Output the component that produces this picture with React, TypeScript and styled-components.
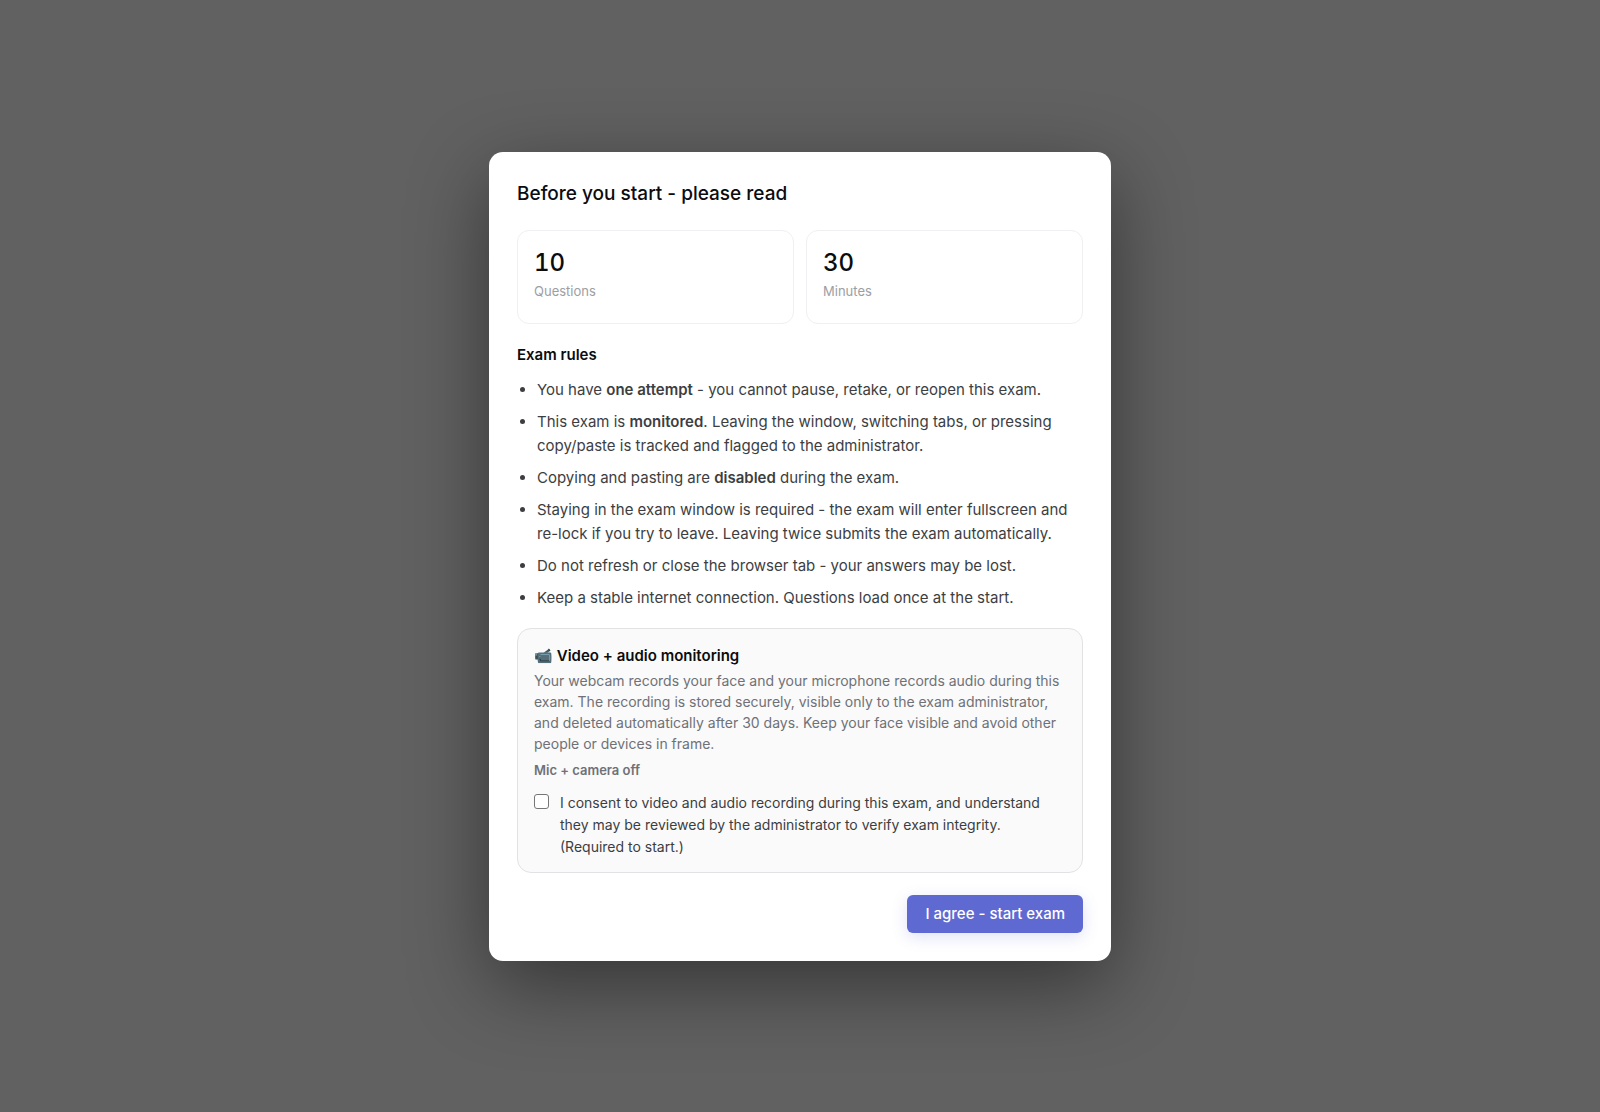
import React, { useState } from "react";
import styled, { createGlobalStyle } from "styled-components";

const GlobalStyle = createGlobalStyle`
  *, *::before, *::after { box-sizing: border-box; }
  body {
    margin: 0;
    background: #616161;
    font-family: Inter, "Liberation Sans", sans-serif;
    -webkit-font-smoothing: antialiased;
  }
`;

const Overlay = styled.main`
  display: flex;
  align-items: center;
  justify-content: center;
  min-height: 100vh;
  padding: 24px;
`;

const Dialog = styled.section`
  width: 100%;
  max-width: 622px;
  padding: 28px;
  border-radius: 14px;
  background: #ffffff;
  box-shadow: 0 24px 80px rgba(0, 0, 0, 0.45);
`;

const Title = styled.h1`
  margin: 0 0 22px;
  color: #0b0c0e;
  font-size: 19px;
  font-weight: 500;
  line-height: 28px;
`;

const Stats = styled.div`
  display: grid;
  grid-template-columns: 1fr 1fr;
  gap: 12px;
  margin-bottom: 20px;
`;

const Stat = styled.div`
  padding: 16px 16px 22px;
  border: 1px solid #f0f0f2;
  border-radius: 12px;
`;

const StatValue = styled.div`
  color: #0b0c0e;
  font-size: 24px;
  font-weight: 500;
  font-variant-numeric: tabular-nums;
  line-height: 32px;
`;

const StatLabel = styled.div`
  margin-top: 2px;
  color: #9c9ea3;
  font-size: 13px;
  line-height: 20px;
`;

const SectionTitle = styled.h2`
  margin: 0 0 12px;
  color: #0b0c0e;
  font-size: 15px;
  font-weight: 600;
  line-height: 22px;
`;

const Rules = styled.ul`
  margin: 0 0 18px;
  padding-left: 20px;
  color: #3c3e42;
  font-size: 15px;
  line-height: 24px;

  li + li { margin-top: 8px; }
  strong { font-weight: 600; }
`;

const Monitoring = styled.div`
  padding: 16px 16px 14px;
  border: 1px solid #e2e2e5;
  border-radius: 14px;
  background: #fafafa;
`;

const MonitoringTitle = styled.h2`
  margin: 0 0 3px;
  color: #0b0c0e;
  font-size: 15px;
  font-weight: 600;
  line-height: 22px;
`;

const Note = styled.p`
  margin: 0 0 6px;
  color: #6f7177;
  font-size: 14px;
  line-height: 21px;
`;

const DeviceStatus = styled.p`
  margin: 0 0 12px;
  color: #6f7177;
  font-size: 13px;
  font-weight: 600;
  line-height: 20px;
`;

const Consent = styled.label`
  display: flex;
  align-items: flex-start;
  gap: 11px;
  color: #3c3e42;
  font-size: 14px;
  line-height: 22px;
`;

const Checkbox = styled.input`
  flex: none;
  appearance: none;
  width: 15px;
  height: 15px;
  margin: 2px 0 0;
  border: 1px solid #767676;
  border-radius: 3px;
  background: #ffffff;

  &:checked {
    border-color: #5e69d1;
    background: #5e69d1;
  }
`;

const Actions = styled.div`
  display: flex;
  justify-content: flex-end;
  margin-top: 22px;
`;

const StartButton = styled.button`
  padding: 8px 18px;
  border: 0;
  border-radius: 6px;
  background: #5e69d1;
  box-shadow: 0 4px 16px rgba(94, 105, 209, 0.2);
  color: #ffffff;
  font: 500 15px/22px Inter, "Liberation Sans", sans-serif;
  cursor: pointer;
`;

const stats = [
  { value: 10, label: "Questions" },
  { value: 30, label: "Minutes" },
];

export default function App() {
  const [consented, setConsented] = useState(false);

  return (
    <>
      <GlobalStyle />
      <Overlay>
        <Dialog role="dialog" aria-labelledby="exam-title">
          <Title id="exam-title">Before you start - please read</Title>
          <Stats>
            {stats.map(({ value, label }) => (
              <Stat key={label}>
                <StatValue>{value}</StatValue>
                <StatLabel>{label}</StatLabel>
              </Stat>
            ))}
          </Stats>
          <SectionTitle>Exam rules</SectionTitle>
          <Rules>
            <li>You have <strong>one attempt</strong> - you cannot pause, retake, or reopen this exam.</li>
            <li>This exam is <strong>monitored</strong>. Leaving the window, switching tabs, or pressing copy/paste is tracked and flagged to the administrator.</li>
            <li>Copying and pasting are <strong>disabled</strong> during the exam.</li>
            <li>Staying in the exam window is required - the exam will enter fullscreen and re-lock if you try to leave. Leaving twice submits the exam automatically.</li>
            <li>Do not refresh or close the browser tab - your answers may be lost.</li>
            <li>Keep a stable internet connection. Questions load once at the start.</li>
          </Rules>
          <Monitoring>
            <MonitoringTitle>📹 Video + audio monitoring</MonitoringTitle>
            <Note>
              Your webcam records your face and your microphone records audio during this exam. The recording is
              stored securely, visible only to the exam administrator, and deleted automatically after 30 days. Keep
              your face visible and avoid other people or devices in frame.
            </Note>
            <DeviceStatus>Mic + camera off</DeviceStatus>
            <Consent>
              <Checkbox type="checkbox" checked={consented} onChange={(e) => setConsented(e.target.checked)} />
              <span>
                I consent to video and audio recording during this exam, and understand they may be reviewed by the
                administrator to verify exam integrity. (Required to start.)
              </span>
            </Consent>
          </Monitoring>
          <Actions>
            <StartButton type="button">I agree - start exam</StartButton>
          </Actions>
        </Dialog>
      </Overlay>
    </>
  );
}
